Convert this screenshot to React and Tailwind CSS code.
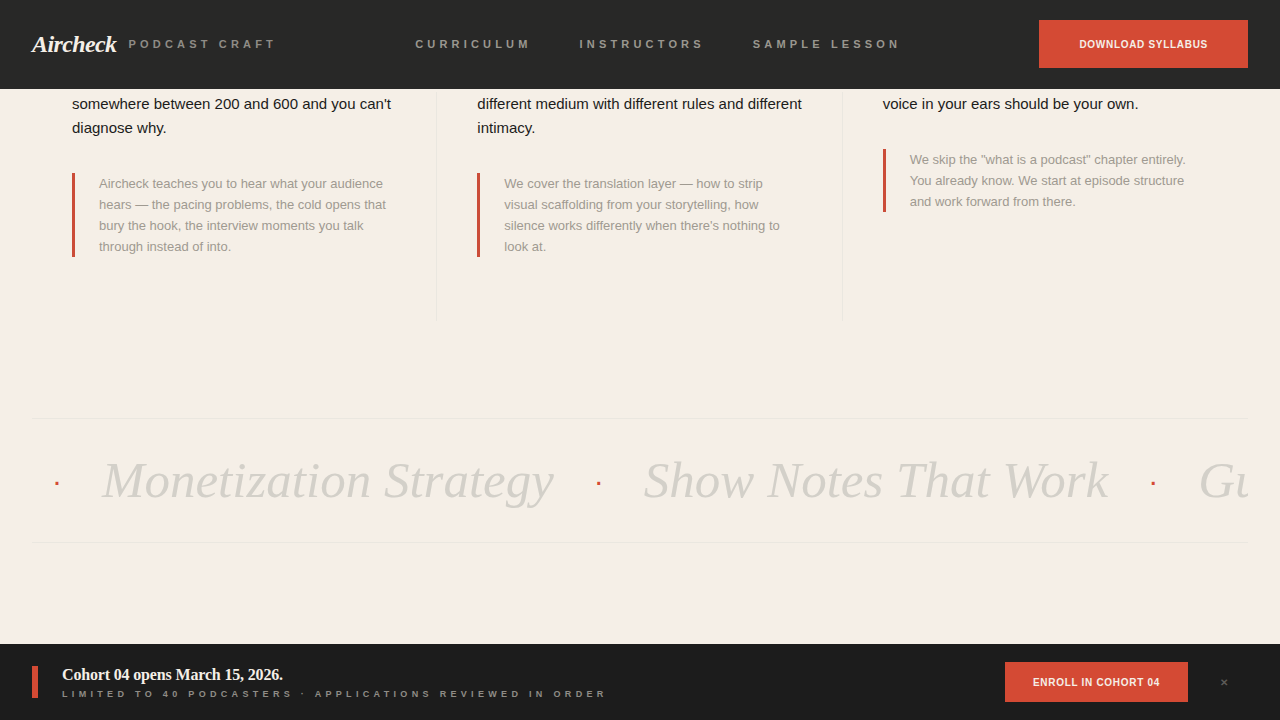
import React, { useState } from 'react';

const navLinks = ['Curriculum', 'Instructors', 'Sample Lesson'];

const reasons = [
  {
    body: "somewhere between 200 and 600 and you can't diagnose why.",
    note: 'Aircheck teaches you to hear what your audience hears — the pacing problems, the cold opens that bury the hook, the interview moments you talk through instead of into.',
  },
  {
    body: 'different medium with different rules and different intimacy.',
    note: "We cover the translation layer — how to strip visual scaffolding from your storytelling, how silence works differently when there's nothing to look at.",
  },
  {
    body: 'voice in your ears should be your own.',
    note: 'We skip the "what is a podcast" chapter entirely. You already know. We start at episode structure and work forward from there.',
  },
];

const topics = ['Monetization Strategy', 'Show Notes That Work', 'Guest Booking'];

function Header() {
  return (
    <header className="sticky top-0 z-20 flex items-center justify-between bg-[#282827] px-8 pt-5 pb-[21px]">
      <a href="#top" className="flex items-center gap-3">
        <span className="font-['Liberation_Serif',serif] text-2xl font-bold italic tracking-tight text-[#f5efe7]">
          Aircheck
        </span>
        <span className="text-[11px] leading-[14px] font-bold uppercase tracking-[0.38em] text-[#8f8c86]">
          Podcast Craft
        </span>
      </a>
      <nav className="flex gap-12">
        {navLinks.map((link) => (
          <a
            key={link}
            href="#"
            className="text-[11px] leading-[14px] font-bold uppercase tracking-[0.38em] text-[#9a978f] hover:text-[#f5efe7]"
          >
            {link}
          </a>
        ))}
      </nav>
      <button
        type="button"
        className="h-12 bg-[#d44a34] px-10 text-[10px] font-bold uppercase tracking-[0.07em] text-[#f5efe7] hover:bg-[#c0402c]"
      >
        Download Syllabus
      </button>
    </header>
  );
}

function Reasons() {
  return (
    <section className="grid grid-cols-3 pt-[3px]">
      {reasons.map((reason) => (
        <article
          key={reason.note}
          className="border-r border-[#eae7e0] pr-9 pb-16 pl-10 last:border-r-0"
        >
          <p className="text-[15px] leading-6 text-[#1c1c1b]">{reason.body}</p>
          <aside className="mt-[33px] mr-2 border-l-3 border-[#cb4c38] pl-6 text-[13px] leading-[21px] text-[#9f9a91]">
            {reason.note}
          </aside>
        </article>
      ))}
    </section>
  );
}

function Ticker() {
  return (
    <section className="mt-[97px] flex items-center gap-10 overflow-hidden border-y border-[#eae7e0] py-8 pl-5 whitespace-nowrap">
      {topics.map((topic) => (
        <React.Fragment key={topic}>
          <span className="text-[30px] leading-8 text-[#d44a34]">·</span>
          <span className="font-['Liberation_Serif',serif] text-[51px] leading-[59px] italic text-[#d3d0c9]">
            {topic}
          </span>
        </React.Fragment>
      ))}
    </section>
  );
}

function CohortBar({ onClose }) {
  return (
    <footer className="sticky bottom-0 z-20 flex items-center bg-[#1c1c1c] px-8 py-[18px]">
      <div className="h-8 w-1.5 bg-[#d44a34]" />
      <div className="ml-6 flex-1">
        <p className="font-['Liberation_Serif',serif] text-base leading-6 font-bold tracking-[-0.01em] text-[#f5efe7]">
          Cohort 04 opens March 15, 2026.
        </p>
        <p className="text-[9px] leading-[14px] font-bold uppercase tracking-[0.48em] text-[#8f8c86]">
          Limited to 40 podcasters · Applications reviewed in order
        </p>
      </div>
      <button
        type="button"
        className="h-10 bg-[#d44a34] px-7 text-[10px] font-bold uppercase tracking-[0.07em] text-[#f5efe7] hover:bg-[#c0402c]"
      >
        Enroll in Cohort 04
      </button>
      <button
        type="button"
        aria-label="Dismiss"
        onClick={onClose}
        className="ml-3 h-10 w-12 text-[10px] font-bold text-[#5c5a57] hover:text-[#f5efe7]"
      >
        ✕
      </button>
    </footer>
  );
}

export default function App() {
  const [showBar, setShowBar] = useState(true);

  return (
    <div className="flex min-h-screen flex-col bg-[#f5efe7] font-['Liberation_Sans',sans-serif]">
      <Header />
      <main className="flex-1 px-8 pb-24">
        <Reasons />
        <Ticker />
      </main>
      {showBar && <CohortBar onClose={() => setShowBar(false)} />}
    </div>
  );
}
